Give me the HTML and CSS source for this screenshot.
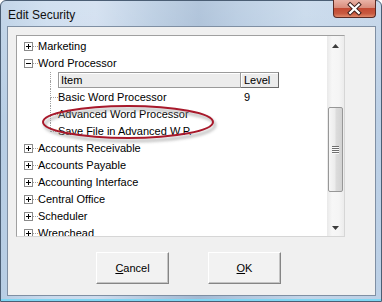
FILE: index.html
```html
<!DOCTYPE html>
<html>
<head>
<meta charset="utf-8">
<link rel="stylesheet" href="styles.css">
</head>
<body>
<div class="window">
  <div class="titlebar">
    <span class="title">Edit Security</span>
    <div class="close">
      <svg width="43" height="17" viewBox="0 0 43 17">
        <path d="M17.5 4.5 L26.5 13 M26.5 4.5 L17.5 13" stroke="#3a1c18" stroke-width="4.2" stroke-linecap="square" fill="none"/>
        <path d="M17.5 4.5 L26.5 13 M26.5 4.5 L17.5 13" stroke="#ffffff" stroke-width="2.2" stroke-linecap="square" fill="none"/>
      </svg>
    </div>
  </div>
  <div class="client">
    <div class="treebox">
      <div class="tree">
        <div class="row"><span class="pm plus"></span><span class="conn"></span><span class="label">Marketing</span></div>
        <div class="row"><span class="pm minus"></span><span class="conn"></span><span class="label">Word Processor</span></div>
        <div class="row">
          <span class="branch"><span class="bt nohz"></span><span class="bb"></span></span>
          <div class="hdr"><span class="hcell hitem">Item</span><span class="hcell hlevel">Level</span></div>
        </div>
        <div class="row">
          <span class="branch"><span class="bt"></span><span class="bb"></span></span>
          <span class="citem">Basic Word Processor</span><span class="clevel">9</span>
        </div>
        <div class="row">
          <span class="branch"><span class="bt"></span><span class="bb"></span></span>
          <span class="citem">Advanced Word Processor</span>
        </div>
        <div class="row">
          <span class="branch"><span class="bt"></span><span class="bb last"></span></span>
          <span class="citem">Save File in Advanced W.P.</span>
        </div>
        <div class="row"><span class="pm plus"></span><span class="conn"></span><span class="label">Accounts Receivable</span></div>
        <div class="row"><span class="pm plus"></span><span class="conn"></span><span class="label">Accounts Payable</span></div>
        <div class="row"><span class="pm plus"></span><span class="conn"></span><span class="label">Accounting Interface</span></div>
        <div class="row"><span class="pm plus"></span><span class="conn"></span><span class="label">Central Office</span></div>
        <div class="row"><span class="pm plus"></span><span class="conn"></span><span class="label">Scheduler</span></div>
        <div class="row"><span class="pm plus"></span><span class="conn"></span><span class="label">Wrenchead</span></div>
      </div>
      <div class="vscroll">
        <div class="sbtn">
          <svg width="17" height="17" viewBox="0 0 17 17"><path d="M5 12 L12 12 L8.5 8 Z" fill="#3c3c3c"/></svg>
        </div>
        <div class="track t1"></div>
        <div class="thumb"><span class="grip"></span></div>
        <div class="track t2"></div>
        <div class="sbtn">
          <svg width="17" height="17" viewBox="0 0 17 17"><path d="M5 7 L12 7 L8.5 11 Z" fill="#3c3c3c"/></svg>
        </div>
      </div>
      <svg class="annot" width="310" height="200" viewBox="0 0 310 200">
        <defs>
          <filter id="sh" x="-20%" y="-50%" width="140%" height="200%">
            <feGaussianBlur stdDeviation="1.4"/>
          </filter>
        </defs>
        <ellipse cx="113" cy="89" rx="85" ry="16" fill="none" stroke="#9a9a9a" stroke-width="2.5" opacity="0.7" filter="url(#sh)"/>
        <ellipse cx="111" cy="86" rx="85" ry="16" fill="none" stroke="#a8192b" stroke-width="2"/>
      </svg>
    </div>
    <div class="buttons">
      <button class="btn"><u>C</u>ancel</button>
      <button class="btn"><u>O</u>K</button>
    </div>
  </div>
</div>
</body>
</html>
```
FILE: styles.css
```css
html, body {
  margin: 0;
  padding: 0;
}
body {
  width: 382px;
  height: 302px;
  overflow: hidden;
  background: #ffffff;
  font-family: "Liberation Sans", Arial, sans-serif;
}
.window {
  box-sizing: border-box;
  width: 382px;
  height: 302px;
  border: 1px solid #4b5e74;
  border-radius: 6px 6px 0 0;
  padding: 0 5px 5px 6px;
  display: flex;
  flex-direction: column;
  background:
    linear-gradient(to bottom, rgba(255,255,255,0.18), rgba(255,255,255,0) 40%),
    linear-gradient(to right, #b7cde4 0%, #c8daed 12%, #cddcee 25%, #b3c8df 40%, #a3bad4 52%, #b0c6de 62%, #c2d5e9 80%, #bcd0e6 100%);
  box-shadow: inset 0 -2px 0 #7fd6f2;
}
.titlebar {
  height: 25px;
  display: flex;
  align-items: flex-start;
}
.title {
  margin: 7px 0 0 1px;
  font-size: 12px;
  line-height: 14px;
  color: #101010;
}
.close {
  margin-left: auto;
  margin-top: -1px;
  width: 43px;
  height: 18px;
  box-sizing: border-box;
  border: 1px solid #5a2a24;
  border-top: none;
  border-radius: 0 0 4px 4px;
  background: linear-gradient(to bottom, #eab3a6 0%, #d98d7c 45%, #c34a33 50%, #c85a40 80%, #e08a6c 100%);
  display: flex;
}
.close svg {
  display: block;
  margin-left: -1px;
}
.client {
  flex: 1;
  box-sizing: border-box;
  border: 1px solid #7f8fa3;
  background: #f0f0f0;
  padding: 8px 0 0 8px;
}
.treebox {
  position: relative;
  box-sizing: border-box;
  width: 329px;
  height: 202px;
  border: 1px solid;
  border-color: #a0a0a0 #d6d6d6 #d6d6d6 #a0a0a0;
  background: #ffffff;
  display: flex;
}
.tree {
  width: 310px;
  height: 200px;
  overflow: hidden;
  box-sizing: border-box;
  padding-top: 2px;
  font-size: 11px;
  color: #000;
}
.row {
  height: 17px;
  display: flex;
  align-items: center;
  white-space: nowrap;
}
.pm {
  box-sizing: border-box;
  width: 9px;
  height: 9px;
  margin-left: 7px;
  border: 1px solid #8a8a8a;
  background-color: #fff;
  flex: none;
}
.pm.minus {
  background: linear-gradient(#000, #000) center / 5px 1px no-repeat, #fff;
}
.pm.plus {
  background:
    linear-gradient(#000, #000) center / 5px 1px no-repeat,
    linear-gradient(#000, #000) center / 1px 5px no-repeat,
    #fff;
}
.conn {
  width: 5px;
  height: 0;
  border-top: 1px dotted #a0a0a0;
  flex: none;
}
.label {
  line-height: 17px;
}
.branch {
  margin-left: 33px;
  width: 8px;
  height: 17px;
  display: flex;
  flex-direction: column;
  flex: none;
}
.bt {
  box-sizing: border-box;
  height: 9px;
  border-left: 1px dotted #a0a0a0;
  border-bottom: 1px dotted #a0a0a0;
}
.bt.nohz {
  border-bottom: none;
}
.bb {
  flex: 1;
  border-left: 1px dotted #a0a0a0;
}
.bb.last {
  border-left: none;
}
.hdr {
  align-self: flex-start;
  display: flex;
}
.hcell {
  box-sizing: border-box;
  height: 16px;
  line-height: 14px;
  border: 1px solid #9a9a9a;
  box-shadow: inset 1px 1px 0 #ffffff;
  background: #ececec;
  padding-left: 2px;
}
.hitem {
  width: 183px;
}
.hlevel {
  width: 38px;
  border-left: none;
  border-right-color: #6a6a6a;
  border-bottom-color: #6a6a6a;
  padding-left: 3px;
}
.citem {
  width: 183px;
  line-height: 17px;
}
.clevel {
  padding-left: 3px;
  line-height: 17px;
}
.vscroll {
  width: 17px;
  height: 200px;
  display: flex;
  flex-direction: column;
  background: linear-gradient(to right, #e9e9e9, #f7f7f7 30%, #f5f5f5 70%, #ececec);
}
.sbtn {
  height: 17px;
  flex: none;
}
.sbtn svg {
  display: block;
}
.track.t1 {
  height: 54px;
}
.track.t2 {
  height: 27px;
}
.thumb {
  box-sizing: border-box;
  height: 85px;
  margin: 0 1px;
  border: 1px solid #979797;
  border-radius: 2px;
  background: linear-gradient(to right, #f6f6f6, #ececec 45%, #dcdcdc 55%, #d2d2d2);
  display: flex;
  align-items: center;
  justify-content: center;
}
.grip {
  width: 7px;
  height: 8px;
  background: repeating-linear-gradient(to bottom, #6f6f6f 0 1px, #fbfbfb 1px 2px);
}
.annot {
  position: absolute;
  left: 0;
  top: 0;
  pointer-events: none;
}
.buttons {
  margin-top: 15px;
  padding-left: 80px;
  display: flex;
  gap: 39px;
}
.btn {
  box-sizing: border-box;
  width: 73px;
  height: 32px;
  margin: 0;
  padding: 0;
  border: 1px solid;
  border-color: #ffffff #858585 #858585 #ffffff;
  box-shadow: inset -1px -1px 0 #c4c4c4;
  background: #f2f2f2;
  font-family: "Liberation Sans", Arial, sans-serif;
  font-size: 11px;
  color: #000;
}
.btn u {
  text-decoration: underline;
}
```
